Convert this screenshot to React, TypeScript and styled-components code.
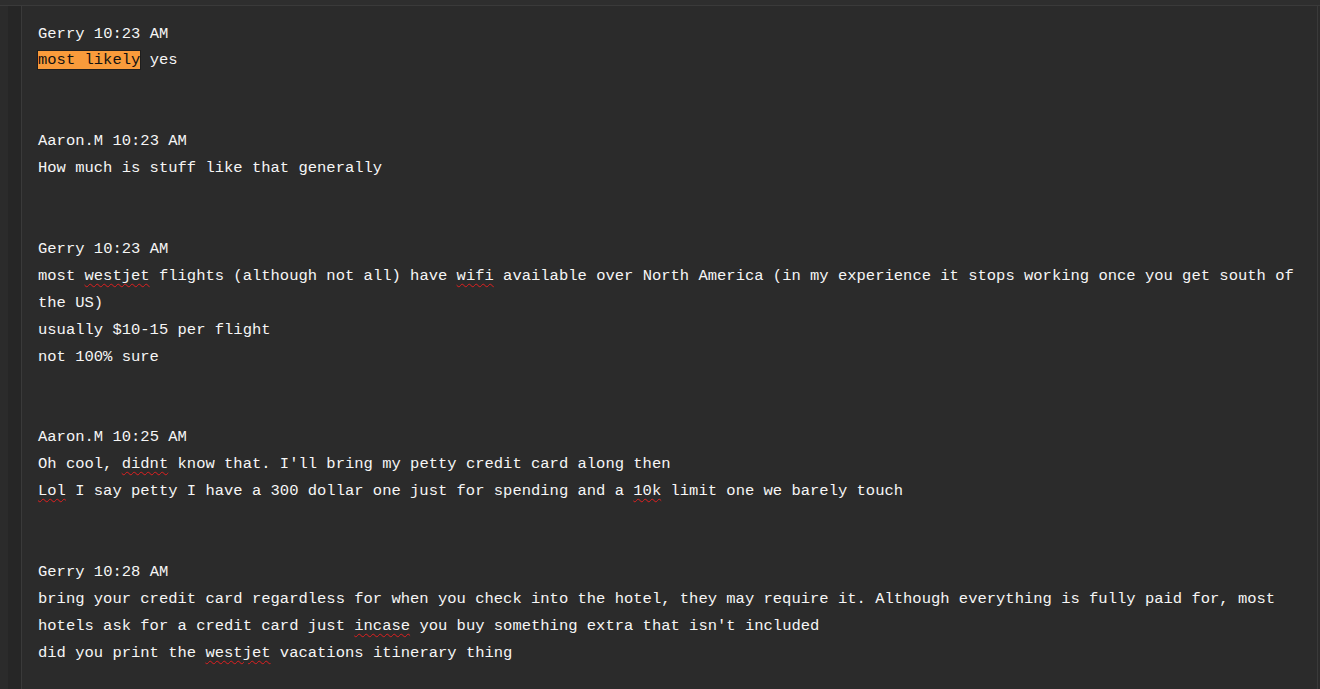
import * as React from 'react';
import styled, { createGlobalStyle } from 'styled-components';

const GlobalStyle = createGlobalStyle`
  html, body {
    margin: 0;
    padding: 0;
    background: #2b2b2b;
  }
`;

const Page = styled.div`
  display: flex;
  flex-direction: column;
  width: 1320px;
  height: 689px;
  overflow: hidden;
  background: #2b2b2b;
`;

const TopBar = styled.div`
  height: 5px;
  background: #2e2e2e;
  border-bottom: 1px solid #3a3a3a;
`;

const Body = styled.div`
  display: flex;
  flex: 1;
  min-height: 0;
`;

const Gutter = styled.div`
  width: 8px;
  background: #2b2b2b;
`;

const Rail = styled.div`
  width: 13px;
  background: #262626;
  border-right: 1px solid #3a3a3a;
`;

const Content = styled.div`
  flex: 1;
  padding: 14.5px 8px 0 16px;
  border-right: 1px solid #3a3a3a;
  margin-right: 2px;
  font-family: 'Liberation Mono', 'DejaVu Sans Mono', monospace;
  font-size: 15.5px;
  line-height: 26.92px;
  color: #f6f6f6;
`;

const Message = styled.div`
  margin-bottom: 53.84px;
`;

const Line = styled.div`
  white-space: pre-wrap;
`;

const Typo = styled.span`
  text-decoration: underline wavy #e02020;
  text-decoration-thickness: 1px;
  text-underline-offset: 3px;
`;

const Mark = styled.span`
  background: #f99b3b;
  color: #111;
  outline: 1px solid #1e1e1e;
`;

type Msg = { who: string; time: string; lines: React.ReactNode[] };

const messages: Msg[] = [
  {
    who: 'Gerry',
    time: '10:23 AM',
    lines: [
      <>
        <Mark>most likely</Mark> yes
      </>,
    ],
  },
  {
    who: 'Aaron.M',
    time: '10:23 AM',
    lines: ['How much is stuff like that generally'],
  },
  {
    who: 'Gerry',
    time: '10:23 AM',
    lines: [
      <>
        most <Typo>westjet</Typo> flights (although not all) have <Typo>wifi</Typo> available over North
        America (in my experience it stops working once you get south of the US)
      </>,
      'usually $10-15 per flight',
      'not 100% sure',
    ],
  },
  {
    who: 'Aaron.M',
    time: '10:25 AM',
    lines: [
      <>
        Oh cool, <Typo>didnt</Typo> know that. I'll bring my petty credit card along then
      </>,
      <>
        <Typo>Lol</Typo> I say petty I have a 300 dollar one just for spending and a <Typo>10k</Typo> limit
        one we barely touch
      </>,
    ],
  },
  {
    who: 'Gerry',
    time: '10:28 AM',
    lines: [
      <>
        bring your credit card regardless for when you check into the hotel, they may require it. Although
        everything is fully paid for, most hotels ask for a credit card just <Typo>incase</Typo> you buy
        something extra that isn't included
      </>,
      <>
        did you print the <Typo>westjet</Typo> vacations itinerary thing
      </>,
    ],
  },
];

export default function App() {
  return (
    <Page>
      <GlobalStyle />
      <TopBar />
      <Body>
        <Gutter />
        <Rail />
        <Content>
          {messages.map((m, i) => (
            <Message key={i}>
              <Line>
                {m.who} {m.time}
              </Line>
              {m.lines.map((l, j) => (
                <Line key={j}>{l}</Line>
              ))}
            </Message>
          ))}
        </Content>
      </Body>
    </Page>
  );
}
